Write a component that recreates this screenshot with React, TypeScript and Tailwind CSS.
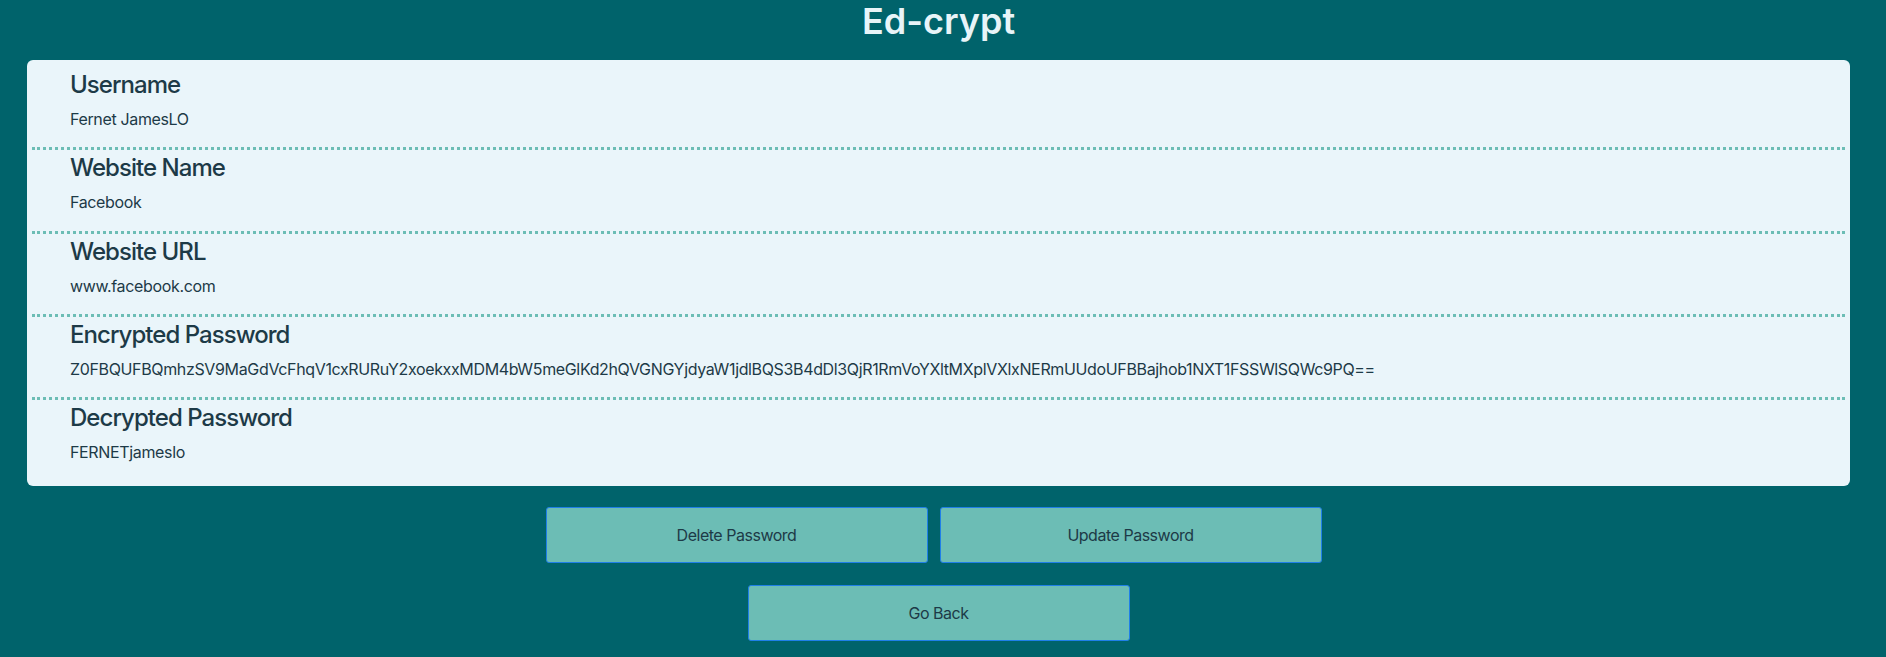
const rows = [
  { label: "Username", value: "Fernet JamesLO" },
  { label: "Website Name", value: "Facebook" },
  { label: "Website URL", value: "www.facebook.com" },
  {
    label: "Encrypted Password",
    value:
      "Z0FBQUFBQmhzSV9MaGdVcFhqV1cxRURuY2xoekxxMDM4bW5meGlKd2hQVGNGYjdyaW1jdlBQS3B4dDl3QjR1RmVoYXltMXplVXlxNERmUUdoUFBBajhob1NXT1FSSWlSQWc9PQ==",
  },
  { label: "Decrypted Password", value: "FERNETjameslo" },
];

const App = () => {
  return (
    <div
      className="min-h-[657px] w-full bg-[#00636b]"
      style={{ fontFamily: "Inter, 'Noto Sans', sans-serif" }}
    >
      <div className="w-[1877px]">
        <h1 className="text-center text-[36px] leading-[1.2] font-semibold text-[#e8f4f8]">
          Ed-crypt
        </h1>

        <div className="mx-[27px] mt-[17px] rounded-md bg-[#eaf5fa] px-[5px] pt-[7px] pb-[5px]">
          {rows.map((row, i) => (
            <div
              key={row.label}
              className={
                i < rows.length - 1
                  ? "border-b-[3px] border-dotted border-[#6cbdb5] pl-[38px] pt-[4px] pb-[16.5px]"
                  : "pl-[38px] pt-[4px] pb-[16.5px]"
              }
            >
              <h4 className="text-[24px] leading-[1.2] font-medium tracking-[-0.04em] text-[#1d3a47]">
                {row.label}
              </h4>
              <p className="mt-[7px] text-[16px] leading-6 tracking-[-0.022em] text-[#1d3a47]">
                {row.value}
              </p>
            </div>
          ))}
        </div>

        <div className="mt-[21px] flex justify-center gap-3 pr-[10px]">
          <button className="h-[56px] w-[382px] rounded-[3px] border border-[#1f7fe8] bg-[#6cbdb5] text-[16px] tracking-[-0.03em] text-[#1d3a47]">
            Delete Password
          </button>
          <button className="h-[56px] w-[382px] rounded-[3px] border border-[#1f7fe8] bg-[#6cbdb5] text-[16px] tracking-[-0.03em] text-[#1d3a47]">
            Update Password
          </button>
        </div>

        <div className="mt-[22px] flex justify-center pb-4">
          <button className="h-[56px] w-[382px] rounded-[3px] border border-[#1f7fe8] bg-[#6cbdb5] text-[16px] tracking-[-0.03em] text-[#1d3a47]">
            Go Back
          </button>
        </div>
      </div>
    </div>
  );
};

export default App;
